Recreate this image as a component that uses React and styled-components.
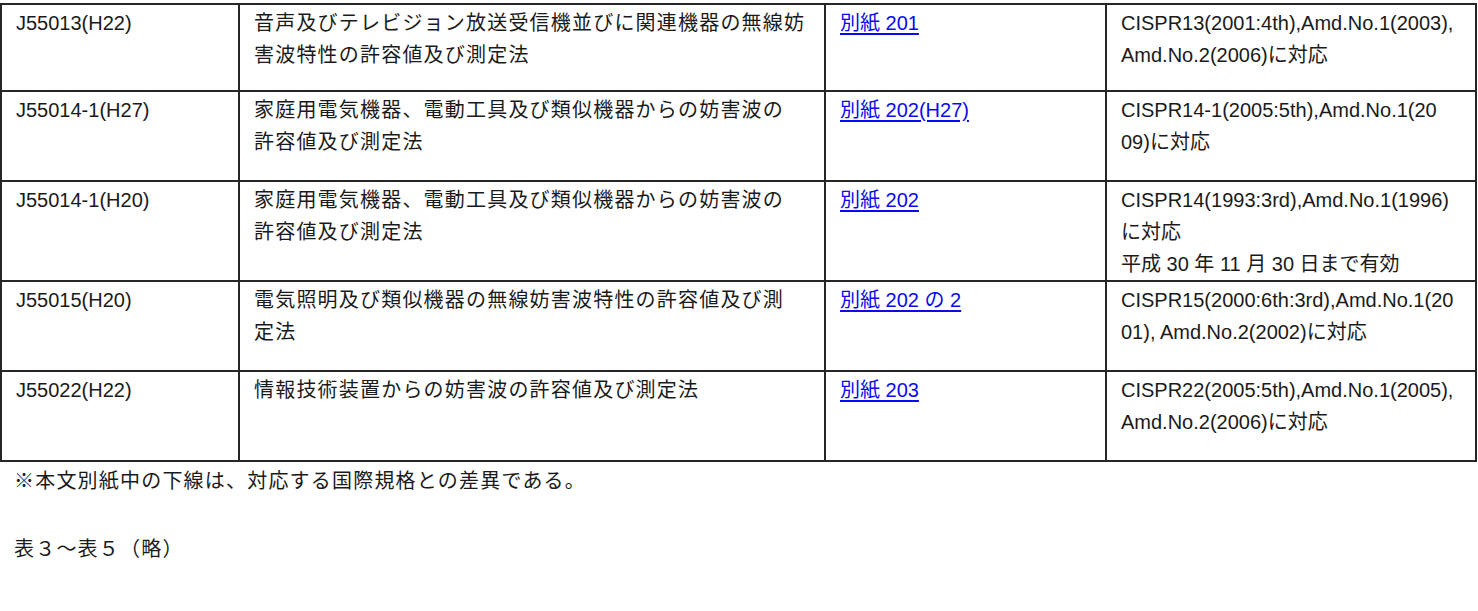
import React from 'react';
import styled, { createGlobalStyle } from 'styled-components';

const GlobalStyle = createGlobalStyle`
  body {
    margin: 0;
    background: #fff;
    color: #1a1a1a;
    font-family: 'Liberation Sans', 'Noto Sans CJK JP', sans-serif;
    font-size: 20px;
  }
`

const Page = styled.div`
  display: flex;
  flex-direction: column;
  padding-top: 3px;
`

const Table = styled.table`
  width: 1475px;
  border-collapse: collapse;
  table-layout: fixed;
`

const Row = styled.tr`
  height: ${props => props.h}px;
`

// w is the column width from border to border
const Cell = styled.td`
  width: ${props => props.w - 30}px;
  border: 2px solid #262626;
  padding: 2px 14px 0;
  vertical-align: top;
  line-height: 32px;
  white-space: nowrap;
  overflow: hidden;
  letter-spacing: ${props => props.cjk ? '1.2px' : '0'};
`

const DocLink = styled.a`
  color: #0a0aee;
  text-decoration: underline;
  text-underline-offset: 3px;
`

const Note = styled.p`
  margin: ${props => props.gap}px 0 0;
  padding-left: 14px;
  line-height: 34px;
  letter-spacing: 1.2px;
`

const rows = [
  {
    h: 87,
    code: 'J55013(H22)',
    title: ['音声及びテレビジョン放送受信機並びに関連機器の無線妨', '害波特性の許容値及び測定法'],
    link: '別紙 201',
    note: ['CISPR13(2001:4th),Amd.No.1(2003),', 'Amd.No.2(2006)に対応'],
  },
  {
    h: 90,
    code: 'J55014-1(H27)',
    title: ['家庭用電気機器、電動工具及び類似機器からの妨害波の', '許容値及び測定法'],
    link: '別紙 202(H27)',
    note: ['CISPR14-1(2005:5th),Amd.No.1(20', '09)に対応'],
  },
  {
    h: 100,
    code: 'J55014-1(H20)',
    title: ['家庭用電気機器、電動工具及び類似機器からの妨害波の', '許容値及び測定法'],
    link: '別紙 202',
    note: ['CISPR14(1993:3rd),Amd.No.1(1996)', 'に対応', '平成 30 年 11 月 30 日まで有効'],
  },
  {
    h: 90,
    code: 'J55015(H20)',
    title: ['電気照明及び類似機器の無線妨害波特性の許容値及び測', '定法'],
    link: '別紙 202 の 2',
    note: ['CISPR15(2000:6th:3rd),Amd.No.1(20', '01), Amd.No.2(2002)に対応'],
  },
  {
    h: 90,
    code: 'J55022(H22)',
    title: ['情報技術装置からの妨害波の許容値及び測定法'],
    link: '別紙 203',
    note: ['CISPR22(2005:5th),Amd.No.1(2005),', 'Amd.No.2(2006)に対応'],
  },
]

const Lines = ({ lines }) => lines.map((line, i) => (
  <React.Fragment key={i}>
    {i > 0 ? <br /> : null}
    {line}
  </React.Fragment>
))

const App = () => {
  return (
    <Page>
      <GlobalStyle />
      <Table>
        <tbody>
          {rows.map(row => (
            <Row h={row.h} key={row.code + row.link}>
              <Cell w={238}>{row.code}</Cell>
              <Cell w={586} cjk>
                <Lines lines={row.title} />
              </Cell>
              <Cell w={281}>
                <DocLink href="#">{row.link}</DocLink>
              </Cell>
              <Cell w={370}>
                <Lines lines={row.note} />
              </Cell>
            </Row>
          ))}
        </tbody>
      </Table>
      <Note gap={2}>※本文別紙中の下線は、対応する国際規格との差異である。</Note>
      <Note gap={34}>表３～表５（略）</Note>
    </Page>
  )
}

export default App;
